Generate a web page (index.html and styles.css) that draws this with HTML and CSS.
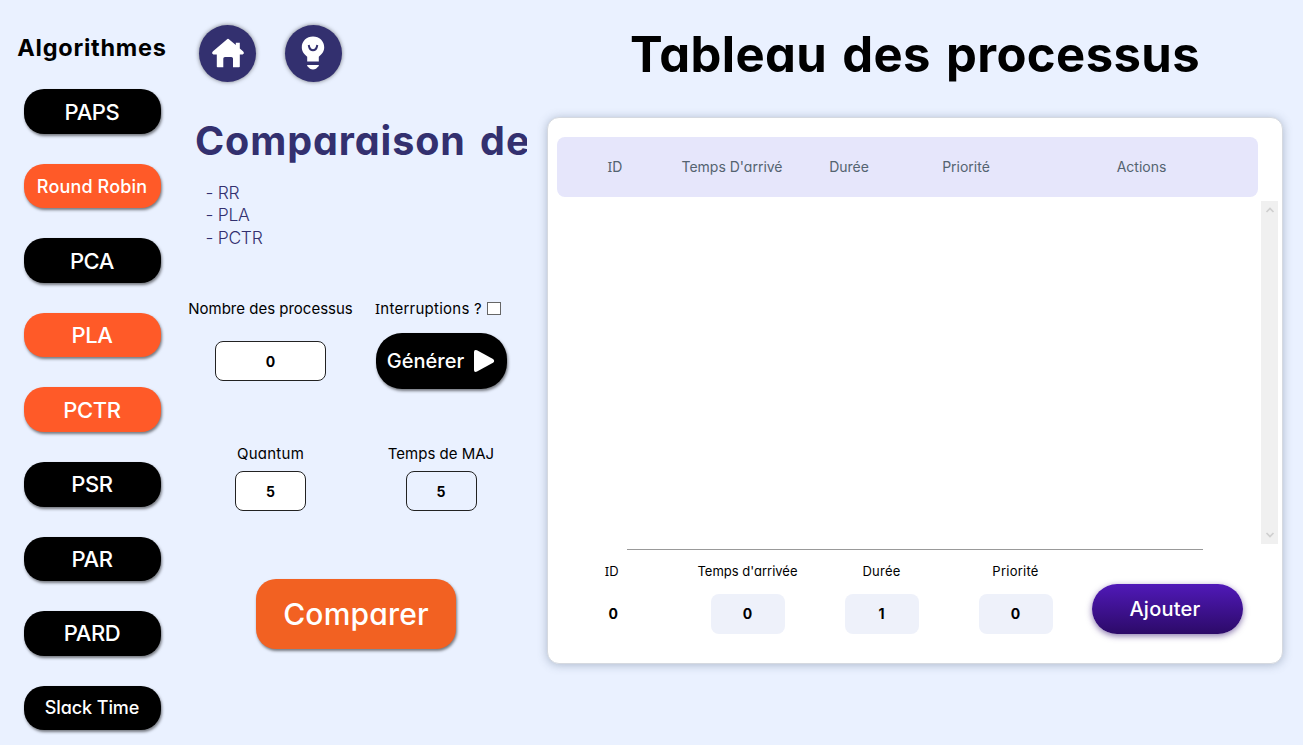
FILE: index.html
```html
<!DOCTYPE html>
<html lang="fr">
<head>
<meta charset="utf-8">
<title>Comparaison</title>
<link rel="stylesheet" href="styles.css">
</head>
<body>
<div class="app">
  <nav class="sidebar">
    <h2 class="sidebar-title">Algorithmes</h2>
    <div class="algos">
      <button class="algo">PAPS</button>
      <button class="algo algo-small algo-on">Round Robin</button>
      <button class="algo">PCA</button>
      <button class="algo algo-on">PLA</button>
      <button class="algo algo-on">PCTR</button>
      <button class="algo">PSR</button>
      <button class="algo">PAR</button>
      <button class="algo">PARD</button>
      <button class="algo algo-small algo-tight">Slack Time</button>
    </div>
  </nav>

  <section class="controls">
    <div class="shortcuts">
      <button class="round" aria-label="Accueil">
        <svg width="32" height="30" viewBox="0 0 32 30"><path d="M14.800 1.400Q16 .3 17.200 1.400L23.800 7V4.700H27.800V10.500L31 13.200Q33 15.500 30.600 16.500H27.800V28.500Q27.800 29.200 27 29.200H21V20.600Q21 19 19.300 19H13Q11.300 19 11.300 20.600V29.200H5.600Q4.800 29.200 4.800 28.500V16.500H1.400Q-1 15.500 1 13.200Z" fill="#fff"/></svg>
      </button>
      <button class="round" aria-label="Astuce">
        <svg width="24" height="34" viewBox="0 0 24 34"><path d="M12 .5C18.400 .5 23.200 5.200 23.200 11.300C23.200 15.500 20.800 18.400 17.800 20.800V25.500H6.200V20.800C3.200 18.400 .8 15.500 .8 11.300C.8 5.200 5.600 .5 12 .5Z" fill="#fff"/><path d="M7.700 9L8.200 11C9.200 15.200 14.800 15.200 15.800 11L16.300 9" fill="none" stroke="#33306f" stroke-width="2"/><path d="M6.200 29H17.800V30L15 32.800Q12 34.400 9 32.800L6.200 30Z" fill="#fff"/></svg>
      </button>
    </div>
    <h1 class="compare-title">Comparaison des algorithmes</h1>
    <ul class="chosen">
      <li>- RR</li>
      <li>- PLA</li>
      <li>- PCTR</li>
    </ul>
    <div class="fields">
      <div class="field field-count">
        <label for="count">Nombre des processus</label>
        <input id="count" class="box box-wide" value="0">
      </div>
      <div class="field field-generate">
        <label class="interrupt"><span class="spaced"><span class="serif-i">I</span>nterruptions ?</span><span class="check"></span></label>
        <button class="generate"><span>Générer</span>
          <svg width="22" height="24" viewBox="0 0 22 24"><path d="M1 3Q1 .2 4 1.300L20 10Q22.300 12 20 13.800L4 22.600Q1 23.600 1 21Z" fill="#fff"/></svg>
        </button>
      </div>
      <div class="field field-num">
        <label for="quantum" class="spaced">Quantum</label>
        <input id="quantum" class="box" value="5">
      </div>
      <div class="field field-num">
        <label for="maj">Temps de MAJ</label>
        <input id="maj" class="box box-clear" value="5">
      </div>
    </div>
    <button class="compare">Comparer</button>
  </section>

  <section class="table-area">
    <h1 class="table-title">Tableau des processus</h1>
    <div class="card">
      <div class="thead">
        <span><span class="serif-i">I</span>D</span><span>Temps D'arrivé</span><span>Durée</span><span>Priorité</span><span>Actions</span>
      </div>
      <div class="tbody">
        <div class="scrollbar">
          <svg width="10" height="8" viewBox="0 0 10 8"><path d="M1.500 6L5 2.500L8.500 6" fill="none" stroke="#cfcfcf" stroke-width="1.700"/></svg>
          <svg width="10" height="8" viewBox="0 0 10 8"><path d="M1.500 2L5 5.500L8.500 2" fill="none" stroke="#cfcfcf" stroke-width="1.700"/></svg>
        </div>
      </div>
      <div class="rule"></div>
      <div class="add-row">
        <div class="cell cell-first"><span class="cell-label id-label"><span class="serif-i">I</span>D</span><b class="cell-id">0</b></div>
        <div class="cell"><label class="cell-label" for="arr">Temps d'arrivée</label><input id="arr" class="cell-input" value="0"></div>
        <div class="cell"><label class="cell-label spaced" for="dur">Durée</label><input id="dur" class="cell-input" value="1"></div>
        <div class="cell"><label class="cell-label spaced" for="pri">Priorité</label><input id="pri" class="cell-input" value="0"></div>
        <button class="add">Ajouter</button>
      </div>
    </div>
  </section>
</div>
</body>
</html>
```
FILE: styles.css
```css
* { box-sizing: border-box; }
body {
  margin: 0;
  background: #eaf1ff;
  color: #000;
  font-family: Inter, "Noto Sans", sans-serif;
  font-feature-settings: "cv11" 1;
}
button, input { font: inherit; font-feature-settings: inherit; letter-spacing: inherit; border: 0; padding: 0; }
button { font-weight: 500; }
h1, h2, ul { margin: 0; padding: 0; }
svg { display: block; }
.serif-i { font-family: "Noto Sans", sans-serif; line-height: 1; }
.spaced { letter-spacing: .25px; }

.app { display: flex; width: 1303px; height: 745px; overflow: hidden; }

/* Algorithm list */
.sidebar { width: 184px; display: flex; flex-direction: column; align-items: center; padding: 32.500px 0 0; }
.sidebar-title { font-size: 23.500px; line-height: 30px; font-weight: 700; letter-spacing: .75px; white-space: nowrap; }
.algos { display: flex; flex-direction: column; gap: 30px; margin-top: 26.800px; }
.algo {
  width: 137px; height: 44.550px; flex: none; border-radius: 20px;
  background: #000; color: #fff; font-size: 22px; letter-spacing: -.4px; white-space: nowrap;
  box-shadow: 1px 2px 3px rgba(0, 0, 0, .5);
}
.algo-small { font-size: 18px; letter-spacing: .15px; }
.algo-tight { letter-spacing: -.1px; }
.algo-on { background: #ff5a28; }

/* Comparison settings */
.controls { width: 343px; display: flex; flex-direction: column; overflow: hidden; }
.shortcuts { display: flex; gap: 28.500px; padding: 24.500px 0 0 15.300px; }
.round {
  width: 57px; height: 57px; border-radius: 50%; background: #33306f;
  display: flex; align-items: center; justify-content: center;
  box-shadow: 0 0 4px rgba(0, 0, 0, .5);
}
.compare-title { margin: 34px 0 0 11px; font-size: 39.500px; line-height: 50px; font-weight: 750; letter-spacing: .9px; word-spacing: 4px; color: #33306f; white-space: nowrap; }
.chosen { margin: 16px 0 0 21.500px; list-style: none; font-size: 17.500px; line-height: 22.500px; font-weight: 300; letter-spacing: -.3px; color: #33306f; }
.fields { display: grid; grid-template-columns: 173px 168px; }
.field { display: flex; flex-direction: column; align-items: center; font-size: 15px; line-height: 20px; white-space: nowrap; }
.field-count, .field-generate { height: 145px; padding-top: 50px; }
.box {
  width: 71px; height: 40px; margin-top: 7.400px; border: 1px solid #222; border-radius: 8px;
  background: #fff; text-align: center; font-size: 14px; font-weight: 700;
}
.box-wide { width: 111px; margin-top: 22px; }
.box-clear { background: transparent; }
.interrupt { display: flex; align-items: center; gap: 5px; height: 19px; margin: 0 6px 1px 0; }
.check { width: 14px; height: 13px; border: 1px solid #666; background: #fff; }
.generate {
  width: 131px; height: 56.500px; margin-top: 13.500px; border-radius: 26px; background: #000; color: #fff;
  display: flex; align-items: center; justify-content: center; gap: 9px; font-size: 20px;
  box-shadow: 1px 2px 3px rgba(0, 0, 0, .5);
}
.field-num { padding-top: 50px; height: 185px; }
.compare {
  width: 200px; height: 70px; margin-left: 72px; border-radius: 20px; background: #f26122; color: #fff;
  font-size: 30px; letter-spacing: .2px; box-shadow: 1px 2px 3px rgba(0, 0, 0, .5);
}

/* Process table */
.table-area { width: 736px; margin-left: 20px; display: flex; flex-direction: column; }
.table-title { margin-top: 23px; font-size: 49px; line-height: 64px; font-weight: 750; letter-spacing: .4px; word-spacing: 3px; text-align: center; white-space: nowrap; }
.card {
  height: 547px; margin-top: 29.500px; padding: 19px 4px 0 9px; border: 1px solid #d5d9e0; border-radius: 12px;
  background: #fff; box-shadow: 0 1px 10px rgba(60, 80, 110, .35);
}
.thead {
  width: 701px; height: 60px; border-radius: 8px; background: #e6e6fb; color: #546370;
  display: grid; grid-template-columns: 116px 118px 116px 118px 233px; align-items: center; text-align: center; font-size: 14px; line-height: 20px; white-space: nowrap;
}
.tbody { height: 343px; margin-top: 4.500px; display: flex; justify-content: flex-end; }
.scrollbar { width: 17px; background: #f0f0f0; display: flex; flex-direction: column; justify-content: space-between; align-items: center; padding: 5px 0; }
.rule { width: 576px; height: 1px; margin: 5px 0 0 70px; background: #999; }
.add-row { display: flex; }
.cell { width: 134px; flex: none; padding-top: 11px; display: flex; flex-direction: column; align-items: center; white-space: nowrap; }
.cell-first { width: 123.500px; padding-right: 11px; }
.cell-label { font-size: 13px; line-height: 20px; height: 20px; }
.id-label { margin-right: 3px; }
.cell-input { width: 74px; height: 40px; margin-top: 12.500px; border-radius: 8px; background: #eef1fa; text-align: center; font-size: 14px; font-weight: 700; }
.cell-id { margin-top: 12.500px; font-size: 14px; line-height: 40px; }
.add {
  width: 151px; height: 50px; flex: none; border-radius: 25px; margin: 34px 0 0 9.500px; padding-right: 5px; color: #fff; font-size: 20px; letter-spacing: .25px;
  background: linear-gradient(#5019b8, #2c0a68); box-shadow: 0 2px 6px rgba(60, 30, 120, .6);
}
```
